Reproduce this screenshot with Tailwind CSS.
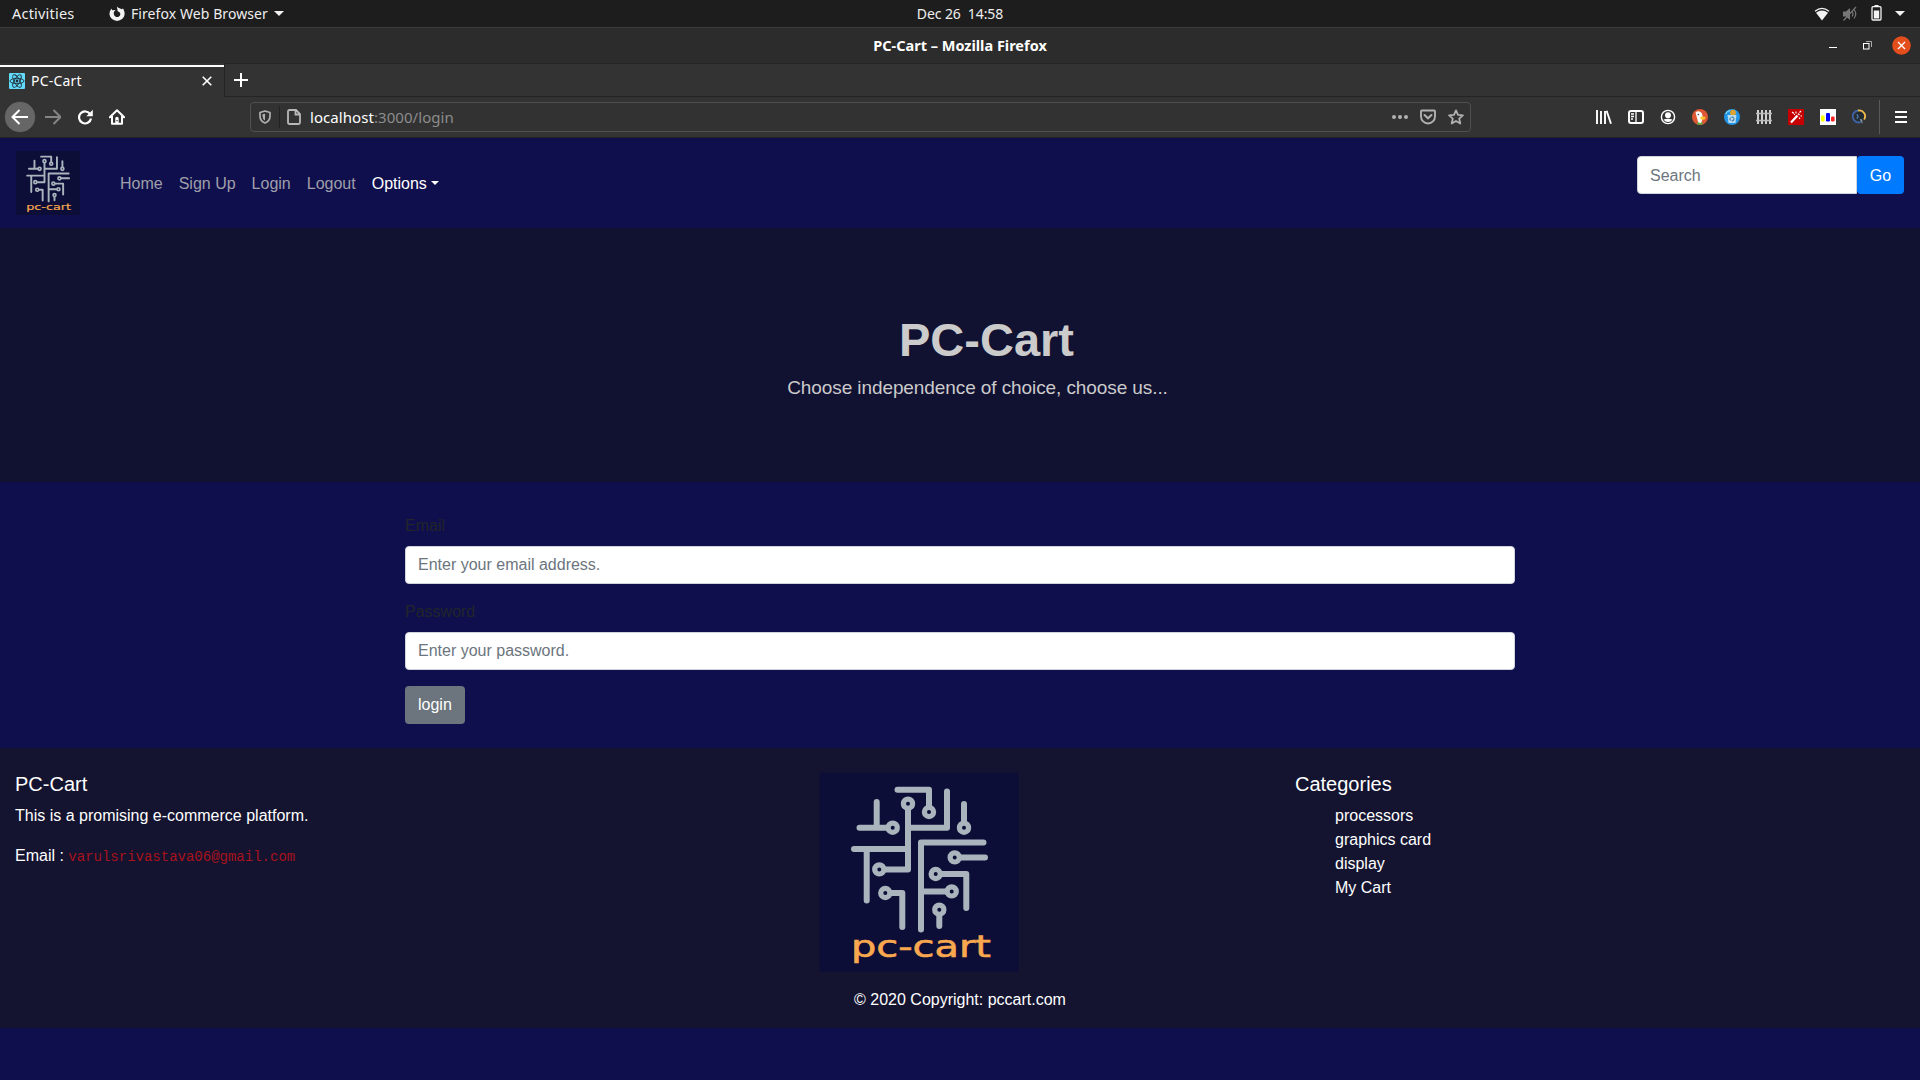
<!DOCTYPE html>
<html lang="en">
<head>
<meta charset="utf-8">
<title>PC-Cart</title>
<script src="https://cdn.jsdelivr.net/npm/@tailwindcss/browser@4"></script>
</head>
<body class="flex h-[1080px] w-[1920px] flex-col overflow-hidden bg-[#100f4e] font-['Liberation_Sans',Arial,sans-serif] text-base text-white">

<svg class="hidden">
  <symbol id="logo" viewBox="0 0 200 200">
    <rect x=".5" y=".5" width="199.500" height="199.500" fill="#0c0e37"/>
    <g fill="none" stroke="#a9b4bd" stroke-width="6" stroke-linecap="round" stroke-linejoin="round">
      <path d="M78.5 17.7H110V34M89 38V97.4H67M128 19.6V55.7H89M57.7 30V55.7M40.5 55.7H68M145 32V50M35 77H89M47.7 77V128.5M164.5 70.4H102V157.5M142 85.4H166M123 102H147.3V136M102 119.4H126M120.3 144V154M73 121H83.3V155"/>
      <g stroke-width="5.2" fill="#0c0e37">
        <circle cx="110" cy="40" r="4.6"/><circle cx="89" cy="31.7" r="4.6"/><circle cx="60.3" cy="97.4" r="4.6"/><circle cx="73.7" cy="55.7" r="4.6"/><circle cx="145" cy="55.7" r="4.6"/><circle cx="135.7" cy="85.4" r="4.6"/><circle cx="116.7" cy="102" r="4.6"/><circle cx="132.7" cy="119.4" r="4.6"/><circle cx="120.3" cy="137.7" r="4.6"/><circle cx="66.3" cy="121" r="4.6"/>
      </g>
    </g>
    <text x="32" y="185" textLength="140" lengthAdjust="spacingAndGlyphs" font-family="DejaVu Sans, sans-serif" font-size="30" fill="#f9a84f" stroke="#f9a84f" stroke-width=".6">pc-cart</text>
  </symbol>
</svg>

<!-- Desktop panel -->
<div class="grid h-[27px] shrink-0 grid-cols-3 items-center bg-[#1d1d1d] font-['Noto_Sans',sans-serif] text-[14px] text-[#eee]">
  <div class="flex items-center pl-3">
    <span class="w-[97px] text-[14.5px] tracking-[0.2px]">Activities</span>
    <svg class="mr-[6px] size-4" viewBox="0 0 16 16"><path d="M8 .5C8.8 2 11 2.2 12.500 3.200L14 2.500C15 4 15.800 6 15.600 8.500A7.600 7.200 0 0 1 .5 8.500C.4 6 1.200 4 2.600 2.400L3 4.200 6.500 4 5 5.700C4.200 8 5.500 11 8.200 11 11 11 12 8.500 10.800 6.500L8.500 5C9 3.500 7.600 2 8 .5Z" fill="#f2f2f2"/></svg>
    <span class="tracking-[0.08px]">Firefox Web Browser</span>
    <span class="ml-[6px] border-x-[5px] border-t-[5px] border-x-transparent border-t-[#f2f2f2]"></span>
  </div>
  <div class="-mt-px text-center tracking-[-0.1px] whitespace-pre">Dec 26  14:58</div>
  <div class="flex items-center justify-end gap-[13px] pr-[15px]">
    <svg class="-mr-px h-[14px] w-4" viewBox="0 0 16 14"><path d="M1 4.300Q8-1.500 15 4.300" fill="none" stroke="#f2f2f2" stroke-width="1.300"/><path d="M2 5.700Q8 1.300 14 5.700L8 13.500Z" fill="#f2f2f2"/></svg>
    <svg class="size-4" viewBox="0 0 16 16"><path d="M1 5.500h3L8 2v12L4 10.500H1Z" fill="#777"/><path d="M10 5.500q2 2.500 0 5M12 3.500q3.500 4.500 0 9M1.500 14.500L14 1" fill="none" stroke="#777" stroke-width="1.200"/></svg>
    <svg class="-mt-[2px] h-4 w-[11px]" viewBox="0 0 11 16"><path d="M3.500 0h4v1.500h-4z" fill="#f2f2f2"/><rect x="1" y="1.700" width="9" height="13.300" rx="1" fill="none" stroke="#f2f2f2" stroke-width="1.300"/><path d="M2.800 5.500h5.400v8H2.800z" fill="#f2f2f2"/></svg>
    <span class="border-x-[5px] border-t-[5px] border-x-transparent border-t-[#f2f2f2]"></span>
  </div>
</div>

<!-- Window title bar -->
<div class="grid h-9 shrink-0 grid-cols-3 items-center border-t border-[#3b3b3b] bg-[#2c2c2c]">
  <span></span>
  <span class="text-center font-['Noto_Sans',sans-serif] text-[14.5px] font-bold">PC-Cart – Mozilla Firefox</span>
  <div class="flex items-center justify-end pr-[9px]">
    <span class="mt-[4px] mr-[26px] h-[1px] w-2 bg-white"></span>
    <svg class="mr-5 h-[9px] w-[9px]" viewBox="0 0 9 9"><path d="M3 .5h5.500V6" fill="none" stroke="#aaa"/><rect x=".5" y="2.500" width="5.500" height="5.500" fill="none" stroke="#fff"/></svg>
    <svg class="size-[19px]" viewBox="0 0 19 19"><circle cx="9.500" cy="9.500" r="9.300" fill="#e44d1c"/><path d="M6 6l7 7M13 6l-7 7" stroke="#fff" stroke-width="1.300"/></svg>
  </div>
</div>

<!-- Tabs -->
<div class="flex h-[34px] shrink-0 bg-[#333] font-['Noto_Sans',sans-serif]">
  <div class="flex w-[225px] flex-col border-r border-[#242424] pt-[2px]">
    <div class="flex h-full w-[224px] items-center border-t-2 border-white pr-[12px] pb-[2px] pl-[9px]">
      <svg class="size-4" viewBox="0 0 16 16"><rect width="16" height="16" rx="1" fill="#61dafb"/><g fill="none" stroke="#20303a" stroke-width=".9"><ellipse cx="8" cy="8" rx="7" ry="2.700"/><ellipse cx="8" cy="8" rx="7" ry="2.700" transform="rotate(60 8 8)"/><ellipse cx="8" cy="8" rx="7" ry="2.700" transform="rotate(120 8 8)"/></g><circle cx="8" cy="8" r="1.400" fill="#20303a"/></svg>
      <span class="ml-[6px] flex-1 text-[14px] leading-5 tracking-[0.2px]">PC-Cart</span>
      <svg class="size-[10px]" viewBox="0 0 10 10"><path d="M.7.700l8.600 8.600M9.300.700L.7 9.300" stroke="#fff" stroke-width="1.600"/></svg>
    </div>
  </div>
  <div class="flex flex-1 items-center border-t border-b border-[#242424] pl-[9px]">
    <svg class="size-[14px]" viewBox="0 0 14 14"><path d="M7 0v14M0 7h14" stroke="#fff" stroke-width="2"/></svg>
  </div>
</div>

<!-- Browser toolbar -->
<div class="flex h-[41px] shrink-0 items-center border-b border-[#222] bg-[#333] pl-1">
  <svg class="size-8" viewBox="0 0 32 32"><circle cx="16" cy="16" r="15.700" fill="#666" stroke="#222" stroke-width=".6"/><path d="M24 16H9M15.500 9L8.500 16l7 7" fill="none" stroke="#fff" stroke-width="2"/></svg>
  <svg class="ml-[9px] size-4" viewBox="0 0 16 16"><path d="M0 8h15M8.500 1l7 7-7 7" fill="none" stroke="#858585" stroke-width="2"/></svg>
  <svg class="ml-4 size-4" viewBox="0 0 16 16"><path d="M13.300 5.500A6 6 0 1 0 14 9.500" fill="none" stroke="#fff" stroke-width="2.200"/><path d="M15.800.8V7.300H9.300Z" fill="#fff"/></svg>
  <svg class="ml-4 size-4" viewBox="0 0 16 16"><path d="M.8 8.300L8 1.300l7.200 7M3 7.500v7.300h10V7.500" fill="none" stroke="#fff" stroke-width="2" stroke-linejoin="round" stroke-linecap="round"/><path d="M6.300 15V9.500a1.700 1.700 0 0 1 3.400 0V15z" fill="#fff"/><path d="M7.500 11h1.200v1.200H7.500z" fill="#333"/></svg>

  <div class="ml-[125px] flex h-[30px] w-[1221px] items-center rounded border border-[#505050] bg-[#323232] pr-[6px] pl-2">
    <svg class="h-[14px] w-3" viewBox="0 0 12 14"><path d="M6 1L11 2.500V6Q11 11 6 13 1 11 1 6V2.500Z" fill="none" stroke="#b1b1b1" stroke-width="1.700" stroke-linejoin="round"/><path d="M6 3.800V10.500Q3.500 9 3.500 6V4.300Z" fill="#b1b1b1"/></svg>
    <span class="mr-[7px] ml-[8px] h-[22px] w-px bg-[#222]"></span>
    <svg class="h-4 w-[14px]" viewBox="0 0 14 16"><path d="M2.500 1H9l4 4v8.500A1.500 1.500 0 0 1 11.500 15h-9A1.500 1.500 0 0 1 1 13.500v-11A1.500 1.500 0 0 1 2.500 1ZM8.500 1.500v4H13" fill="none" stroke="#b8b8b8" stroke-width="1.800"/></svg>
    <span class="ml-[9px] flex-1 font-['Noto_Sans',sans-serif] text-[15px] tracking-[0.06px] text-[#8c8c8c]"><span class="text-white">localhost</span>:3000/login</span>
    <svg class="h-4 w-4" viewBox="0 0 16 16" fill="#b1b1b1"><circle cx="2" cy="8" r="2"/><circle cx="8" cy="8" r="2"/><circle cx="14" cy="8" r="2"/></svg>
    <svg class="ml-3 size-4" viewBox="0 0 16 16"><path d="M1.800 1.500h12.400a.8.800 0 0 1 .8.800V7.500a7 7 0 0 1-14 0V2.300a.8.800 0 0 1 .8-.8Z" fill="none" stroke="#b1b1b1" stroke-width="1.900"/><path d="M4.500 6L8 9.300 11.500 6" fill="none" stroke="#b1b1b1" stroke-width="2" stroke-linecap="round"/></svg>
    <svg class="ml-3 size-4" viewBox="0 0 16 16"><path d="M8 1.400l2 4.500 4.900.5-3.700 3.200 1.100 4.900L8 12l-4.300 2.500 1.100-4.900L1.100 6.400l4.900-.5Z" fill="none" stroke="#b1b1b1" stroke-width="1.800" stroke-linejoin="round"/></svg>
  </div>

  <div class="ml-[125px] flex items-center gap-4">
    <svg class="size-4" viewBox="0 0 16 16"><path d="M1 1v14M5 2v13M9 2v13" stroke="#fff" stroke-width="1.900"/><path d="M10.600 1.800L15 14.800" stroke="#fff" stroke-width="1.900"/></svg>
    <svg class="size-4" viewBox="0 0 16 16"><rect x="1" y="2" width="14" height="12" rx="2" fill="none" stroke="#fff" stroke-width="2"/><path d="M8 2v12M3 5h3M3 7.500h3M3 10h2" stroke="#fff" stroke-width="1.300"/></svg>
    <svg class="size-4" viewBox="0 0 16 16"><circle cx="8" cy="8" r="6.600" fill="none" stroke="#fff" stroke-width="1.400"/><circle cx="8" cy="6.300" r="3" fill="#fff"/><path d="M3.500 10.500Q8 9 12.500 10.500 11 13 8 13T3.500 10.500Z" fill="#fff"/></svg>
    <svg class="size-4" viewBox="0 0 16 16"><circle cx="8" cy="8" r="8" fill="#de5833"/><path d="M3.500 3.500Q6 1.500 8.500 3q2 1.200 2 4v3L9 14.500H6.500Z" fill="#fff"/><path d="M8.500 7.800h5q1 .8-1 1.500l1 .7q-1.500 1.300-5 .3Z" fill="#fdc52b"/><path d="M5.500 13l3 1 2-1v2.500l-5 .3Z" fill="#5eb146"/><circle cx="6.300" cy="5.500" r=".8" fill="#345"/></svg>
    <svg class="size-4" viewBox="0 0 16 16"><circle cx="8" cy="8" r="8" fill="#2196e8"/><path d="M1.500 5Q3 2 6 1.500" stroke="#aee" fill="none"/><circle cx="9" cy="3.700" r="2.900" fill="#e0a42e"/><path d="M3.500 6h9L11.500 14h-7Z" fill="#b5dcf3"/><circle cx="8" cy="10" r="2" fill="none" stroke="#2b5c80" stroke-dasharray="3 1"/></svg>
    <svg class="size-4" viewBox="0 0 16 16"><path d="M2 1v14M6 1v14M10 1v14M14 1v14" stroke="#d0d0d0" stroke-width="2"/><path d="M0 4.500h16M0 11.500h16" stroke="#bbb" stroke-width="1.300"/></svg>
    <svg class="size-4" viewBox="0 0 16 16"><rect width="16" height="16" fill="#c60000"/><path d="M3 13.500L9.500 6.500" stroke="#fff" stroke-width="2.200"/><path d="M10 4.500l1.500 1.500M8 2.500v2M4 3l2 1.500M11.500 3.500L13 2M12.500 7H14M6 5.500h1M11 8.500l1 1.500" stroke="#fff" stroke-width="1.100"/></svg>
    <svg class="size-4" viewBox="0 0 16 16"><rect width="16" height="16" fill="#fff"/><rect x="1" y="6.500" width="3.600" height="6" rx="1.200" fill="#ff0"/><rect x="6" y="4" width="4" height="8.500" rx="1.200" fill="#00f"/><rect x="11" y="7.500" width="3.600" height="5" rx="1.200" fill="#f22"/></svg>
    <svg class="size-4" viewBox="0 0 16 16"><circle cx="7.500" cy="7.500" r="4.500" fill="#222a33"/><path d="M6 1.500A6 6 0 1 0 9 13" fill="none" stroke="#3e63a8" stroke-width="1.800"/><path d="M6 1.500A5.800 5.800 0 0 1 12 10.500" fill="none" stroke="#f0bd4c" stroke-width="1.800"/><path d="M7.500 10l3 5-.3-4.500Z" fill="#8a9aa8"/><path d="M4.500 6q1.500-1 1.500 1.500T4.500 9" stroke="#5ca0d8" fill="none"/></svg>
  </div>
  <span class="ml-[11px] h-[34px] w-px bg-[#595959]"></span>
  <svg class="ml-[15px] h-[14px] w-3" viewBox="0 0 12 14"><path d="M0 2h12M0 7h12M0 12h12" stroke="#fff" stroke-width="2"/></svg>
</div>

<!-- Site navigation -->
<nav class="flex h-[90px] shrink-0 items-start px-4 pt-[13px]">
  <svg class="size-16"><use href="#logo"/></svg>
  <div class="ml-10 flex h-16 items-center gap-4 pt-[2px] text-[#9f9fa9]">
    <a>Home</a><a>Sign Up</a><a>Login</a><a>Logout</a>
    <a class="flex items-center text-white">Options<span class="mb-[3px] ml-1 border-x-[4.8px] border-t-[4.8px] border-x-transparent border-t-white"></span></a>
  </div>
  <form class="mt-[5px] ml-auto flex">
    <input class="h-[38px] w-[220px] rounded-l border border-[#ced4da] bg-white px-3 pt-[2px] placeholder:text-[#6c757d]" placeholder="Search">
    <button type="button" class="h-[38px] w-[47px] rounded bg-[#007bff] pt-[2px]">Go</button>
  </form>
</nav>

<!-- Hero -->
<header class="flex h-[254px] shrink-0 flex-col items-center bg-[#111132] text-[#cbcbcb]">
  <h1 class="mt-[83px] ml-[53px] text-[47px] leading-[58px] font-bold">PC-Cart</h1>
  <p class="mt-[5px] ml-[35px] text-[19px] leading-7 tracking-[-0.09px]">Choose independence of choice, choose us...</p>
</header>

<!-- Login form -->
<main class="flex h-[266px] shrink-0 flex-col items-start px-[405px] pt-[32px] text-[#212529]">
  <label class="mb-2 leading-6">Email</label>
  <input class="mb-4 h-[38px] w-full rounded border border-[#ced4da] bg-white px-3 placeholder:text-[#6c757d]" placeholder="Enter your email address.">
  <label class="mb-2 leading-6">Password</label>
  <input type="password" class="mb-4 h-[38px] w-full rounded border border-[#ced4da] bg-white px-3 placeholder:text-[#6c757d]" placeholder="Enter your password.">
  <button type="button" class="h-[38px] rounded bg-[#6c757d] px-[13px] text-white">login</button>
</main>

<!-- Footer -->
<footer class="flex h-[280px] shrink-0 flex-col bg-[#141430]">
  <div class="flex h-[224px] pt-6">
    <section class="w-[804px] pl-[15px]">
      <h5 class="mb-2 text-xl leading-6">PC-Cart</h5>
      <p class="leading-6">This is a promising e-commerce platform.</p>
      <p class="mt-4 leading-6">Email : <code class="font-['Liberation_Mono',monospace] text-[14px] text-[#a8121c]">varulsrivastava06@gmail.com</code></p>
    </section>
    <svg class="ml-[15px] size-[200px]"><use href="#logo"/></svg>
    <section class="ml-[276px]">
      <h5 class="mb-2 text-xl leading-6">Categories</h5>
      <ul class="pl-10 leading-6"><li>processors</li><li>graphics card</li><li>display</li><li>My Cart</li></ul>
    </section>
  </div>
  <p class="pt-4 text-center leading-6">© 2020 Copyright: pccart.com</p>
</footer>
</body>
</html>
